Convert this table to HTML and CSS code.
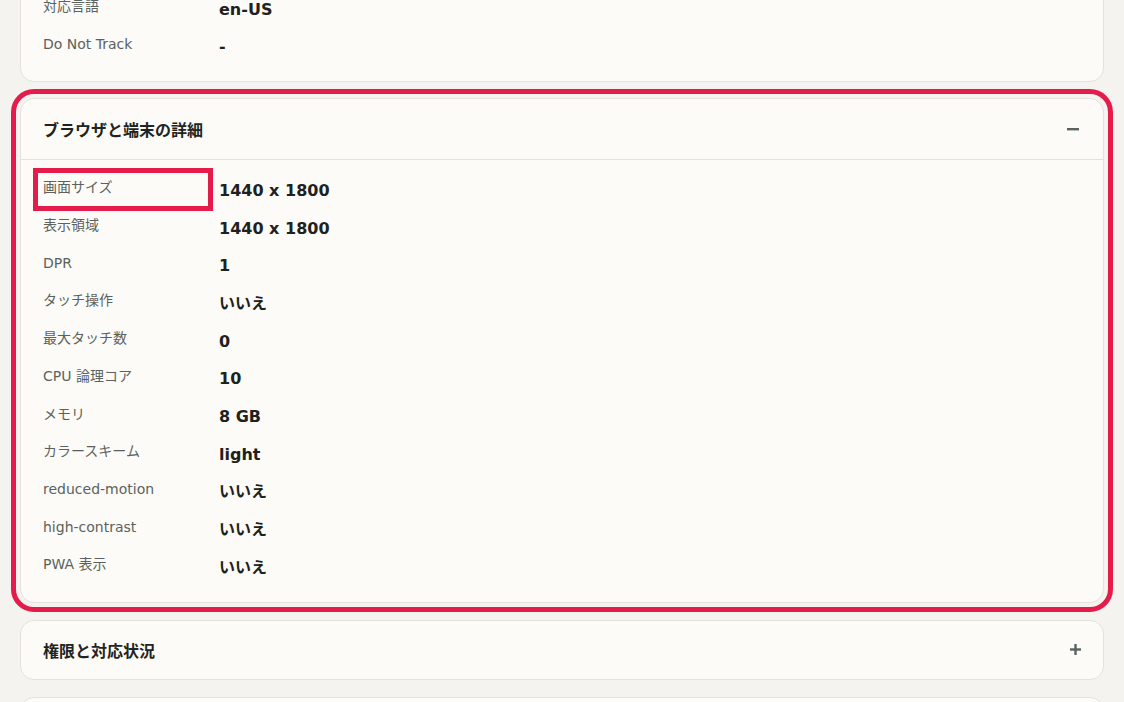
FILE: index.html
```html
<!DOCTYPE html>
<html lang="ja">
<head>
<meta charset="utf-8">
<title>端末情報</title>
<link rel="stylesheet" href="styles.css">
</head>
<body>
<main class="page">
  <section class="card card-first">
    <div class="rows">
      <div class="row"><div class="label">対応言語</div><div class="value">en-US</div></div>
      <div class="row"><div class="label">Do Not Track</div><div class="value">-</div></div>
    </div>
  </section>

  <section class="card highlight">
    <header class="card-head open">
      <h2 class="card-title">ブラウザと端末の詳細</h2>
      <svg class="toggle" width="12" height="12" viewBox="0 0 12 12" aria-hidden="true"><rect x="0" y="5" width="12" height="2.4" fill="#5b6360"/></svg>
    </header>
    <div class="rows">
      <div class="row"><div class="label">画面サイズ<span class="mark"></span></div><div class="value">1440 x 1800</div></div>
      <div class="row"><div class="label">表示領域</div><div class="value">1440 x 1800</div></div>
      <div class="row"><div class="label">DPR</div><div class="value">1</div></div>
      <div class="row"><div class="label">タッチ操作</div><div class="value">いいえ</div></div>
      <div class="row"><div class="label">最大タッチ数</div><div class="value">0</div></div>
      <div class="row"><div class="label">CPU 論理コア</div><div class="value">10</div></div>
      <div class="row"><div class="label">メモリ</div><div class="value">8 GB</div></div>
      <div class="row"><div class="label">カラースキーム</div><div class="value">light</div></div>
      <div class="row"><div class="label">reduced-motion</div><div class="value">いいえ</div></div>
      <div class="row"><div class="label">high-contrast</div><div class="value">いいえ</div></div>
      <div class="row"><div class="label">PWA 表示</div><div class="value">いいえ</div></div>
    </div>
  </section>

  <section class="card">
    <header class="card-head">
      <h2 class="card-title">権限と対応状況</h2>
      <svg class="toggle plus" width="11" height="11" viewBox="0 0 11 11" aria-hidden="true"><rect x="0" y="4.3" width="11" height="2.4" fill="#5b6360"/><rect x="4.3" y="0" width="2.4" height="11" fill="#5b6360"/></svg>
    </header>
  </section>

  <section class="card card-next">
    <header class="card-head"></header>
  </section>
</main>
</body>
</html>
```

FILE: styles.css
```css
html, body {
  margin: 0;
  padding: 0;
  background: #f4f3ef;
  height: 100%;
  overflow: hidden;
}

body {
  font-family: "DejaVu Sans", "Noto Sans CJK JP", sans-serif;
  color: #1f2421;
}

.page {
  display: flex;
  flex-direction: column;
  padding: 0 20px;
}

.card {
  background: #fcfbf7;
  border: 1px solid #e4e2db;
  border-radius: 14px;
  margin-bottom: 17px;
}

.card-first {
  margin-top: -21px;
  margin-bottom: 16px;
  border-top-left-radius: 0;
  border-top-right-radius: 0;
}

.highlight {
  outline: 5px solid #e31c4b;
  outline-offset: 4px;
}

.card-head {
  height: 58px;
  display: flex;
  align-items: center;
  justify-content: space-between;
  padding: 0 24px 0 22px;
}

.card-head.open {
  height: 60px;
  border-bottom: 1px solid #e4e2db;
}

.card-head .plus {
  margin-right: -2px;
}

.card-title {
  margin: 0;
  font-family: "Noto Sans CJK JP", sans-serif;
  font-size: 16px;
  font-weight: 700;
  color: #1f2421;
}

.rows {
  padding: 11.5px 22px 15.5px 22px;
}

.card-first .rows {
  padding-top: 10.5px;
  padding-bottom: 15.5px;
}

.row {
  display: flex;
  height: 37.7px;
}

.label {
  position: relative;
  width: 176px;
  flex: none;
  padding-top: 6.5px;
  font-size: 14px;
  line-height: 18px;
  color: #5b625e;
  font-weight: 400;
}

.value {
  padding-top: 7px;
  font-size: 16px;
  line-height: 24px;
  font-weight: 600;
  color: #1d2220;
}

.mark {
  position: absolute;
  left: -10px;
  top: -3.5px;
  width: 180px;
  height: 42.5px;
  box-sizing: border-box;
  border: 5px solid #e31c4b;
}
```
